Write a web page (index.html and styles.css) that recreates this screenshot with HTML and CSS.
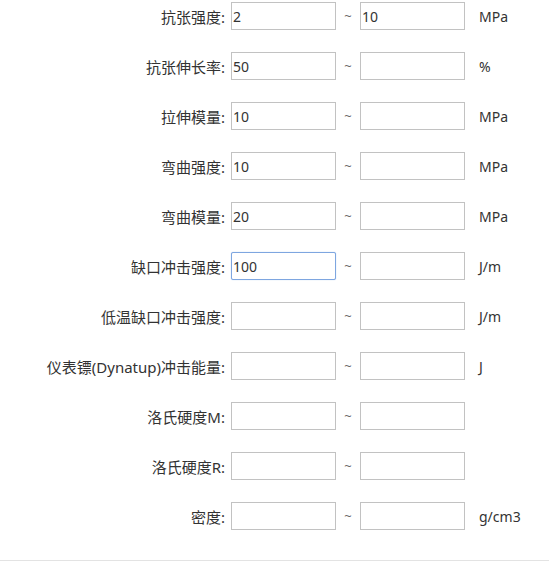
FILE: index.html
```html
<!DOCTYPE html>
<html lang="zh-CN">
<head>
<meta charset="utf-8">
<title>物性</title>
<link rel="stylesheet" href="styles.css">
</head>
<body>
<div class="form">
  <div class="row"><label class="lbl">抗张强度:</label><input class="box" value="2"><span class="tilde">~</span><input class="box" value="10"><span class="unit">MPa</span></div>
  <div class="row"><label class="lbl">抗张伸长率:</label><input class="box" value="50"><span class="tilde">~</span><input class="box" value=""><span class="unit">%</span></div>
  <div class="row"><label class="lbl">拉伸模量:</label><input class="box" value="10"><span class="tilde">~</span><input class="box" value=""><span class="unit">MPa</span></div>
  <div class="row"><label class="lbl">弯曲强度:</label><input class="box" value="10"><span class="tilde">~</span><input class="box" value=""><span class="unit">MPa</span></div>
  <div class="row"><label class="lbl">弯曲模量:</label><input class="box" value="20"><span class="tilde">~</span><input class="box" value=""><span class="unit">MPa</span></div>
  <div class="row"><label class="lbl">缺口冲击强度:</label><input class="box focus" value="100"><span class="tilde">~</span><input class="box" value=""><span class="unit">J/m</span></div>
  <div class="row"><label class="lbl">低温缺口冲击强度:</label><input class="box" value=""><span class="tilde">~</span><input class="box" value=""><span class="unit">J/m</span></div>
  <div class="row"><label class="lbl">仪表镖(Dynatup)冲击能量:</label><input class="box" value=""><span class="tilde">~</span><input class="box" value=""><span class="unit">J</span></div>
  <div class="row"><label class="lbl">洛氏硬度M:</label><input class="box" value=""><span class="tilde">~</span><input class="box" value=""><span class="unit"></span></div>
  <div class="row"><label class="lbl">洛氏硬度R:</label><input class="box" value=""><span class="tilde">~</span><input class="box" value=""><span class="unit"></span></div>
  <div class="row"><label class="lbl">密度:</label><input class="box" value=""><span class="tilde">~</span><input class="box" value=""><span class="unit">g/cm3</span></div>
</div>
</body>
</html>
```
FILE: styles.css
```css
html, body {
  margin: 0;
  padding: 0;
  background: #fff;
}
body {
  font-family: "Noto Sans", "Noto Sans CJK SC", sans-serif;
  font-size: 14px;
  color: #333;
}
.form {
  height: 558px;
  padding-top: 2px;
  border-bottom: 1px solid #e3e3e3;
  display: flex;
  flex-direction: column;
  gap: 22px;
}
.row {
  display: grid;
  grid-template-columns: 231px 105px 24px 105px auto;
  align-items: center;
  height: 28px;
}
.lbl {
  box-sizing: border-box;
  text-align: right;
  padding-right: 6px;
  white-space: nowrap;
  color: #333;
  font-size: 15px;
}
.box {
  box-sizing: border-box;
  width: 105px;
  height: 28px;
  margin: 0;
  padding: 0 0 0 1px;
  border: 1px solid #c2c2c2;
  font-family: "Noto Sans", "Noto Sans CJK SC", sans-serif;
  font-size: 14px;
  color: #333;
  outline: none;
  background: #fff;
}
.focus {
  border-color: #7ea6e0;
  border-radius: 2px;
  box-shadow: 0 0 1px #9cbcec;
}
.tilde {
  text-align: center;
  color: #666;
  font-size: 13px;
}
.unit {
  padding-left: 14px;
  color: #333;
}
```
